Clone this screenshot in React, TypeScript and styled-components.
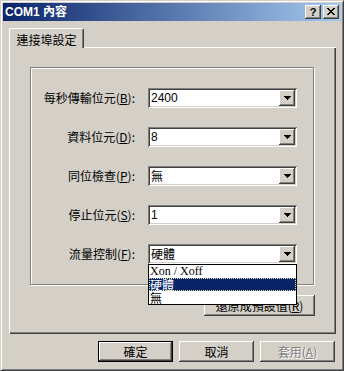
import React from "react";
import styled, { createGlobalStyle } from "styled-components";

const FACE = "#D4D0C8";

const Global = createGlobalStyle`
  html, body { margin: 0; padding: 0; background: ${FACE}; }
  body { font-family: "Noto Sans CJK TC", "Liberation Sans", sans-serif; font-size: 12px; color: #000; }
  u { text-decoration: underline; text-underline-offset: 1px; }
`;

const raised = `
  box-shadow: inset -1px -1px 0 #404040, inset 1px 1px 0 #fff, inset -2px -2px 0 #808080;
`;

const Window = styled.div`
  width: 344px;
  height: 371px;
  box-sizing: border-box;
  background: ${FACE};
  border: 1px solid;
  border-color: ${FACE} #404040 #404040 ${FACE};
  box-shadow: inset 1px 1px 0 #fff, inset -1px -1px 0 #808080;
  padding: 2px;
  display: flex;
  flex-direction: column;
`;

const Caption = styled.div`
  height: 18px;
  flex: none;
  display: flex;
  align-items: center;
  background: linear-gradient(to right, #0a246a, #a6caf0);
  padding: 0 2px;
`;

const Title = styled.span`
  color: #fff;
  font-weight: bold;
  font-size: 12px;
  line-height: 18px;
  font-family: "Liberation Sans", "Noto Sans CJK TC", sans-serif;
`;

const CapButtons = styled.div`
  margin-left: auto;
  display: flex;
  gap: 2px;
`;

const CapButton = styled.div`
  width: 16px;
  height: 14px;
  box-sizing: border-box;
  background: ${FACE};
  ${raised}
  display: flex;
  align-items: center;
  justify-content: center;
  font-family: "Liberation Sans", sans-serif;
  font-weight: bold;
  font-size: 11px;
  line-height: 14px;
  padding-bottom: 1px;
`;

const Body = styled.div`
  flex: 1;
  display: flex;
  flex-direction: column;
  padding: 7px 5px 6px 6px;
`;

const TabStrip = styled.div`
  display: flex;
  height: 19px;
  position: relative;
  z-index: 1;
  flex: none;
`;

const Tab = styled.div`
  width: 75px;
  height: 20px;
  box-sizing: border-box;
  background: ${FACE};
  border-top: 1px solid #fff;
  border-left: 1px solid #fff;
  border-right: 1px solid #404040;
  border-radius: 2px 2px 0 0;
  box-shadow: inset -1px 0 0 #808080;
  display: flex;
  align-items: center;
  justify-content: center;
  font-size: 12px;
  padding-top: 1px;
`;

const Panel = styled.div`
  flex: 1;
  box-sizing: border-box;
  background: ${FACE};
  box-shadow: inset 1px 1px 0 #fff, inset -1px -1px 0 #404040, inset -2px -2px 0 #808080;
  padding: 20px 0 0 21px;
  display: flex;
  flex-direction: column;
  align-items: flex-start;
`;

const Group = styled.div`
  width: 284px;
  box-sizing: border-box;
  border: 1px solid #808080;
  box-shadow: inset 1px 1px 0 #fff, 1px 1px 0 #fff;
  padding: 20px 0;
  display: grid;
  grid-template-columns: 104px 149px;
  column-gap: 13px;
  row-gap: 19px;
  align-items: center;
`;

const Label = styled.div`
  text-align: right;
  font-size: 12px;
  line-height: 20px;
  white-space: nowrap;
`;

const Combo = styled.div`
  position: relative;
  height: 20px;
  box-sizing: border-box;
  background: #fff;
  box-shadow: inset 1px 1px 0 #808080, inset -1px -1px 0 #fff, inset 2px 2px 0 #404040,
    inset -2px -2px 0 ${FACE};
  padding: 2px;
  display: flex;
  align-items: center;
`;

const Value = styled.div<{ $latin?: boolean }>`
  flex: 1;
  padding-left: 1px;
  font-size: 12px;
  line-height: 16px;
  font-family: ${(p) =>
    p.$latin ? `"Liberation Sans", sans-serif` : `"Noto Sans CJK TC", sans-serif`};
`;

const DropButton = styled.div`
  width: 16px;
  height: 16px;
  flex: none;
  box-sizing: border-box;
  background: ${FACE};
  ${raised}
  display: flex;
  align-items: center;
  justify-content: center;
`;

const List = styled.div`
  position: absolute;
  top: 100%;
  left: 0;
  width: 149px;
  box-sizing: border-box;
  border: 1px solid #000;
  background: #fff;
  z-index: 5;
`;

const Item = styled.div<{ $selected?: boolean; $serif?: boolean }>`
  height: 13px;
  line-height: 13px;
  padding-left: 1px;
  font-size: 12px;
  box-sizing: border-box;
  white-space: nowrap;
  font-family: ${(p) =>
    p.$serif ? `"Liberation Serif", serif` : `"Noto Sans CJK TC", sans-serif`};
  background: ${(p) => (p.$selected ? "#0a246a" : "#fff")};
  color: ${(p) => (p.$selected ? "#fff" : "#000")};
  outline: ${(p) => (p.$selected ? "1px dotted #e8e4a0" : "none")};
  outline-offset: -1px;
`;

const ResetRow = styled.div`
  width: 285px;
  display: flex;
  justify-content: flex-end;
  margin-top: 10px;
`;

const Button = styled.div<{ $default?: boolean; $disabled?: boolean; $w?: number }>`
  width: ${(p) => p.$w ?? 75}px;
  height: 21px;
  box-sizing: border-box;
  background: ${FACE};
  border: ${(p) => (p.$default ? "1px solid #000" : "none")};
  ${raised}
  display: flex;
  align-items: center;
  justify-content: center;
  font-size: 12px;
  line-height: 16px;
  white-space: nowrap;
  color: ${(p) => (p.$disabled ? "#808080" : "#000")};
  text-shadow: ${(p) => (p.$disabled ? "1px 1px 0 #fff" : "none")};
`;

const ButtonRow = styled.div`
  display: flex;
  justify-content: flex-end;
  gap: 6px;
  margin-top: 7px;
  margin-right: 1px;
  flex: none;
`;

const Arrow = () => (
  <svg width="7" height="4" viewBox="0 0 7 4">
    <path d="M0 0h7v1h-1v1h-1v1h-1v1h-1v-1h-1v-1h-1v-1h-1z" fill="#000" />
  </svg>
);

const CloseGlyph = () => (
  <svg width="8" height="7" viewBox="0 0 8 7">
    <path
      d="M0 0h2v1h1v1h2v-1h1v-1h2v1h-1v1h-1v1h-1v1h1v1h1v1h1v1h-2v-1h-1v-1h-2v1h-1v1h-2v-1h1v-1h1v-1h1v-1h-1v-1h-1v-1h-1z"
      fill="#000"
    />
  </svg>
);

type Row = { label: React.ReactNode; value: string; latin?: boolean; open?: boolean };

const rows: Row[] = [
  { label: <>每秒傳輸位元(<u>B</u>):</>, value: "2400", latin: true },
  { label: <>資料位元(<u>D</u>):</>, value: "8", latin: true },
  { label: <>同位檢查(<u>P</u>):</>, value: "無" },
  { label: <>停止位元(<u>S</u>):</>, value: "1", latin: true },
  { label: <>流量控制(<u>F</u>):</>, value: "硬體", open: true },
];

export default function App() {
  return (
    <>
      <Global />
      <Window>
        <Caption>
          <Title>COM1 內容</Title>
          <CapButtons>
            <CapButton>?</CapButton>
            <CapButton>
              <CloseGlyph />
            </CapButton>
          </CapButtons>
        </Caption>
        <Body>
          <TabStrip>
            <Tab>連接埠設定</Tab>
          </TabStrip>
          <Panel>
            <Group>
              {rows.map((r, i) => (
                <React.Fragment key={i}>
                  <Label>{r.label}</Label>
                  <Combo>
                    <Value $latin={r.latin}>{r.value}</Value>
                    <DropButton>
                      <Arrow />
                    </DropButton>
                    {r.open && (
                      <List>
                        <Item $serif>Xon / Xoff</Item>
                        <Item $selected>硬體</Item>
                        <Item>無</Item>
                      </List>
                    )}
                  </Combo>
                </React.Fragment>
              ))}
            </Group>
            <ResetRow>
              <Button $w={111}>
                還原成預設值(<u>R</u>)
              </Button>
            </ResetRow>
          </Panel>
          <ButtonRow>
            <Button $default>確定</Button>
            <Button>取消</Button>
            <Button $disabled>
              套用(<u>A</u>)
            </Button>
          </ButtonRow>
        </Body>
      </Window>
    </>
  );
}
